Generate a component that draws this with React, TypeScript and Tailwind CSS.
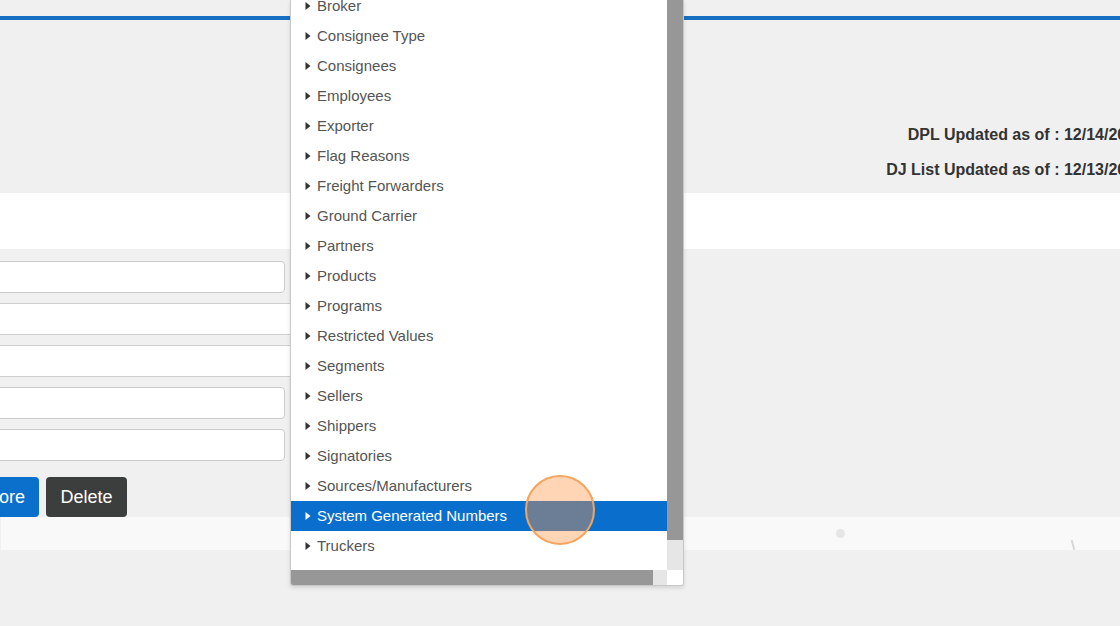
import { Fragment } from 'react';

const items = [
  'Broker',
  'Consignee Type',
  'Consignees',
  'Employees',
  'Exporter',
  'Flag Reasons',
  'Freight Forwarders',
  'Ground Carrier',
  'Partners',
  'Products',
  'Programs',
  'Restricted Values',
  'Segments',
  'Sellers',
  'Shippers',
  'Signatories',
  'Sources/Manufacturers',
  'System Generated Numbers',
  'Truckers',
];

const selected = 'System Generated Numbers';

function Caret({ light }: { light?: boolean }) {
  return (
    <svg width="6" height="10" viewBox="0 0 6 10" className="shrink-0">
      <path d="M0.5 1 L5.5 5 L0.5 9 Z" fill={light ? '#ffffff' : '#333333'} />
    </svg>
  );
}

function Field({ wide }: { wide?: boolean }) {
  if (wide) {
    return <div className="h-[32px] w-[320px] -ml-[10px] border-y border-[#cfcfcf] bg-white" />;
  }
  return <div className="h-[32px] w-[295px] -ml-[10px] rounded-[4px] border border-[#cccccc] bg-white" />;
}

export default function App() {
  return (
    <div
      className="relative w-[1120px] h-[626px] overflow-hidden bg-[#f0f0f0]"
      style={{ fontFamily: '"Liberation Sans", Arial, Helvetica, sans-serif' }}
    >
      {/* page header */}
      <div className="h-[16px]" />
      <div className="h-[4px] bg-[#176fc1]" />
      <div className="h-[173px] flex flex-col items-end pt-[105px] gap-[15px] -mr-[24px]">
        <div className="h-[20px] leading-[20px] text-[16px] font-bold text-[#333333] whitespace-nowrap">
          DPL Updated as of : 12/14/2023
        </div>
        <div className="h-[20px] leading-[20px] text-[16px] font-bold text-[#333333] whitespace-nowrap">
          DJ List Updated as of : 12/13/2023
        </div>
      </div>
      <div className="h-[56px] bg-white" />

      {/* form */}
      <div className="pt-[12px] flex flex-col gap-[10px]">
        <Field />
        <Field wide />
        <Field wide />
        <Field />
        <Field />
      </div>
      <div className="mt-[16px] flex gap-[7px] -ml-[52px]">
        <button className="h-[40px] px-[14px] rounded-[4px] bg-[#0b6fcc] text-white text-[18px]">Restore</button>
        <button className="h-[40px] w-[81px] rounded-[4px] bg-[#3c3d3d] text-white text-[18px]">Delete</button>
      </div>
      <div className="relative h-[33px] bg-[#f9f9f9] ml-[1px]">
        <div className="absolute left-[835px] top-[12px] w-[9px] h-[9px] rounded-full bg-[#e6e6e6]" />
        <div className="absolute left-[1071px] top-[23px] w-[2px] h-[10px] bg-[#d6d6d6] -rotate-[15deg]" />
      </div>

      {/* dropdown menu */}
      <div className="absolute left-[290px] top-0 w-[394px] h-[586px] bg-white border-x border-b border-[#c8c8c8] rounded-b-[3px] shadow-[0_2px_4px_rgba(0,0,0,0.12)] overflow-hidden flex flex-col">
        <div className="flex flex-1 min-h-0">
          <div className="flex-1 overflow-hidden">
            <div className="-mt-[9px]">
              {items.map((label) => {
                const active = label === selected;
                return (
                  <Fragment key={label}>
                    <div
                      className={
                        active
                          ? 'h-[30px] flex items-center pl-[14px] gap-[6px] bg-[#0a6fcc] text-white text-[15px]'
                          : 'h-[30px] flex items-center pl-[14px] gap-[6px] text-[#555555] text-[15px]'
                      }
                    >
                      <Caret light={active} />
                      <span className="whitespace-nowrap">{label}</span>
                    </div>
                  </Fragment>
                );
              })}
            </div>
          </div>
          <div className="w-[16px] flex flex-col">
            <div className="h-[540px] bg-[#979797]" />
            <div className="flex-1 bg-[#e6e6e6]" />
          </div>
        </div>
        <div className="h-[15px] flex">
          <div className="w-[362px] bg-[#979797]" />
          <div className="w-[14px] bg-[#e6e6e6]" />
          <div className="flex-1 bg-white" />
        </div>
      </div>

      {/* click indicator */}
      <div className="absolute left-[525px] top-[475px] w-[70px] h-[70px] rounded-full border-2 border-[#f5a55f] bg-[rgba(255,150,70,0.4)]" />
    </div>
  );
}
